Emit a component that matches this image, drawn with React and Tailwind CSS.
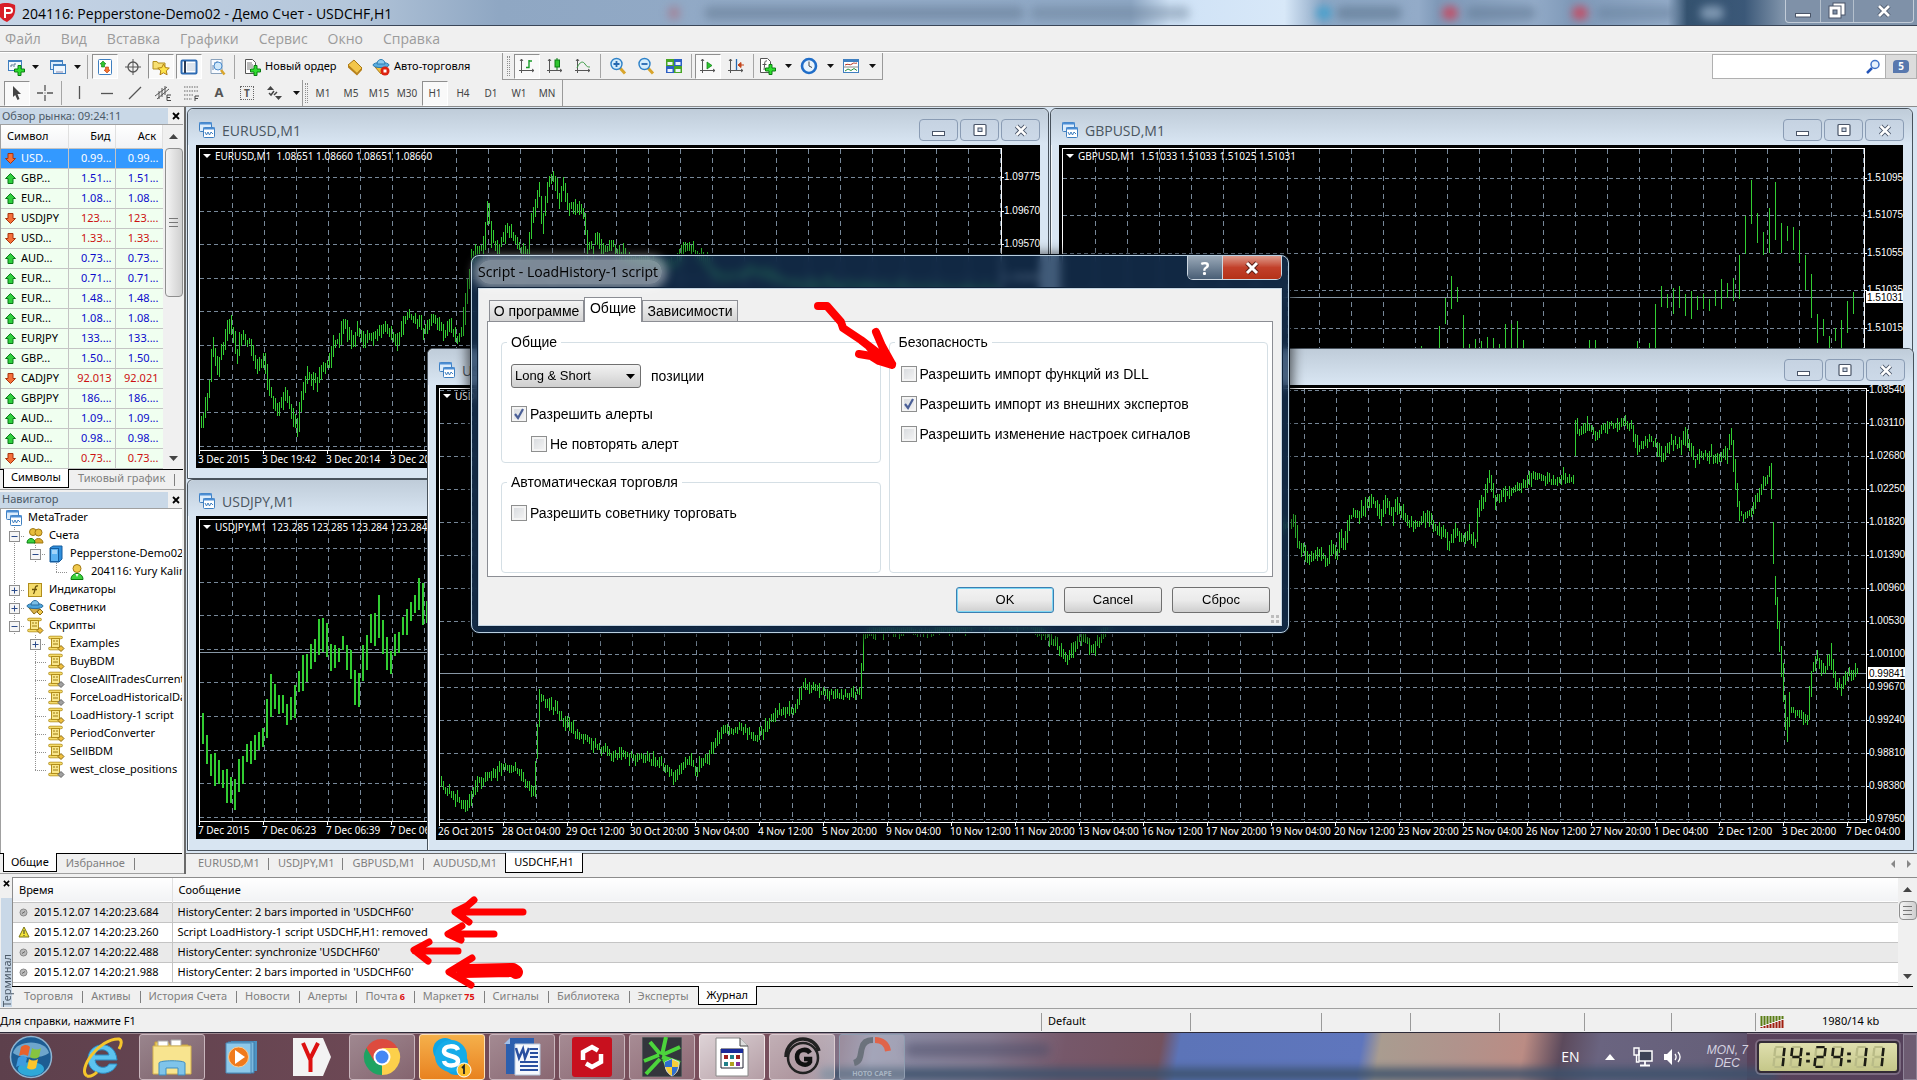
import React from 'react';

/* ---------- helpers ---------- */

function rand(seed) {
  let s = seed;
  return () => {
    s = (s * 16807) % 2147483647;
    return s / 2147483647;
  };
}

function barPath(points, spread, seed, step = 2) {
  const r = rand(seed);
  let d = '';
  let i = 0;
  const end = points[points.length - 1][0];
  for (let x = points[0][0]; x <= end; x += step) {
    while (i < points.length - 2 && points[i + 1][0] < x) i += 1;
    const [x0, y0] = points[i];
    const [x1, y1] = points[i + 1];
    const t = x1 === x0 ? 1 : (x - x0) / (x1 - x0);
    const slope = Math.min(30, Math.abs((y1 - y0) / Math.max(1, x1 - x0)) * step);
    const y = y0 + (y1 - y0) * t + (r() - 0.5) * spread * 0.6;
    const up = spread * (0.25 + r() * r()) + slope / 2;
    const dn = spread * (0.25 + r() * r()) + slope / 2;
    d += `M${Math.round(x) + 0.5} ${Math.round(y - up)}V${Math.round(y + dn)}`;
  }
  return d;
}

const scale = (pts, kx, ox, ky, oy) => pts.map(([x, y]) => [x * kx + ox, y * ky + oy]);

/* ---------- chart data ---------- */

const eurPoints = scale(
  [[28,960],[38,920],[48,860],[56,720],[68,800],[85,710],[100,650],[116,745],[126,700],[150,720],[165,790],[180,760],[196,860],[215,920],[235,870],[252,930],[265,980],[275,880],[288,810],[310,830],[325,800],[345,770],[352,710],[365,705],[380,650],[402,720],[412,670],[425,700],[440,690],[455,700],[480,660],[508,720],[525,640],[552,640],[575,680],[595,640],[630,685],[637,660],[655,700],[668,680],[682,540],[690,470],[706,430],[718,440],[731,310],[740,390],[755,440],[777,370],[795,400],[820,450],[830,440],[840,340],[857,250],[865,360],[880,240],[892,210],[905,290],[915,240],[930,310],[945,300],[965,320],[975,420],[990,425],[997,400],[1010,440],[1032,415],[1050,440],[1100,470],[1190,475],[1215,420],[1240,445],[1300,520],[1400,500],[1480,540],[1980,560]],
  0.408, -6, 0.333, -40,
);

const chfPoints = [
  ...scale(
    [[361,643],[375,655],[382,660],[392,640],[405,632],[420,628],[430,640],[437,650],[440,600],[442,572],[455,582],[470,600],[480,605],[500,618],[520,620],[540,625],[553,638],[562,622],[570,630],[580,618],[590,600],[605,597],[620,604],[635,585],[650,580],[657,562],[670,566],[690,570],[704,566],[707,520],[730,515],[760,518],[800,510],[845,512],[862,525],[872,540],[885,520],[895,533],[905,510],[910,480],[950,460],[1000,400],[1050,430]],
    1.2226, -436, 1.2226, -386,
  ),
  ...scale(
    [[32,560],[42,530],[52,620],[66,635],[78,670],[100,640],[125,665],[135,620],[148,640],[155,590],[165,630],[180,530],[200,530],[225,485],[245,495],[255,540],[268,480],[285,530],[293,495],[315,540],[340,560],[370,530],[400,580],[405,570],[422,615],[440,580],[460,600],[470,585],[487,620],[495,510],[510,470],[522,410],[535,490],[550,465],[575,455],[605,440],[625,410],[650,410],[675,430],[700,415],[720,430],[729,430],[731,300],[734,245],[740,285],[760,260],[780,290],[810,260],[850,250],[870,265],[885,330],[905,305],[925,310],[948,360],[965,310],[990,320],[1004,290],[1025,365],[1045,350],[1070,350],[1080,370],[1095,340],[1102,360],[1112,290],[1118,330],[1128,470],[1135,530],[1160,530],[1175,490],[1195,430],[1210,400],[1214,480],[1218,700],[1228,850],[1240,1010],[1250,1180],[1256,1110],[1280,1120],[1300,1150],[1312,1000],[1325,960],[1337,1000],[1345,990],[1358,950],[1370,1040],[1385,1040],[1405,1000],[1425,1005]],
    0.408, 841, 0.333, -46,
  ),
];

const gbpPoints = scale(
  [[868,270],[900,290],[960,300],[1055,300],[1120,310],[1174,300],[1180,262],[1188,240],[1193,240],[1197,285],[1208,292],[1214,282],[1225,290],[1240,278],[1250,300],[1295,300],[1302,284],[1312,295],[1352,290],[1356,240],[1370,248],[1384,250],[1400,246],[1412,240],[1422,232],[1427,200],[1430,150],[1436,185],[1444,205],[1450,165],[1456,195],[1464,190],[1472,205],[1480,235],[1486,265],[1494,275],[1504,278],[1512,255],[1519,245]],
  1.2226, -1059, 1.2226, -146,
);

const jpyPoints = scale(
  [[165,600],[170,620],[180,640],[190,655],[200,620],[215,600],[220,570],[235,585],[245,560],[258,530],[262,510],[270,540],[280,530],[292,565],[300,530],[308,505],[318,540],[330,515],[342,490],[350,510],[420,520]],
  1.2226, -196, 1.2226, -518,
);

const chfTimes = ['26 Oct 2015','28 Oct 04:00','29 Oct 12:00','30 Oct 20:00','3 Nov 04:00','4 Nov 12:00','5 Nov 20:00','9 Nov 04:00','10 Nov 12:00','11 Nov 20:00','13 Nov 04:00','16 Nov 12:00','17 Nov 20:00','19 Nov 04:00','20 Nov 12:00','23 Nov 20:00','25 Nov 04:00','26 Nov 12:00','27 Nov 20:00','1 Dec 04:00','2 Dec 12:00','3 Dec 20:00','7 Dec 04:00'];
const chfPrices = ['1.03540','1.03110','1.02680','1.02250','1.01820','1.01390','1.00960','1.00530','1.00100','0.99670','0.99240','0.98810','0.98380','0.97950'];

/* ---------- chart ---------- */

function Chart({ w, h, caption, points, spread, seed, step, weight = 1, gridTop, gridStep, prices = [], times = [], priceLine, priceTag }) {
  const right = w - 39;
  const bottom = h - 18;
  const vs = [];
  for (let x = 36; x < right; x += 32) vs.push(x);
  const hs = [];
  for (let y = gridTop; y < bottom; y += gridStep) hs.push(Math.round(y));
  return (
    <svg width={w} height={h} viewBox={`0 0 ${w} ${h}`} className="block bg-black" role="img" aria-label={caption}>
      <g shapeRendering="crispEdges" fill="none">
        <path d={vs.map((x) => `M${x}.5 4V${bottom}`).join('')} stroke="#778899" strokeDasharray="5 4" />
        <path d={hs.map((y) => `M4 ${y}.5H${right}`).join('')} stroke="#778899" strokeDasharray="4 3" />
        {priceLine && <path d={`M4 ${priceLine}.5H${right}`} stroke="#8797a5" />}
        <path d={barPath(points, spread, seed, step)} stroke="#32cd32" strokeWidth={weight} />
        <path d={`M3.5 ${bottom}V3.5H${right}.5V${bottom}.5H3.5`} stroke="#ffffff" />
        <path d={times.map((_, i) => `M${3 + i * 64}.5 ${bottom}v4`).join('')} stroke="#ffffff" />
        <path d={prices.map((_, i) => `M${right} ${Math.round(gridTop + i * gridStep)}.5h3`).join('')} stroke="#ffffff" />
      </g>
      <g fill="#ffffff" className="font-['Noto_Sans',sans-serif] text-[10px]">
        <path d="M7 9h8l-4 4z" />
        <text x="19" y="15">{caption}</text>
        {times.map((t, i) => (
          <text key={t} x={2 + i * 64} y={bottom + 13}>{t}</text>
        ))}
      </g>
      <g fill="#ffffff" className="font-['Liberation_Sans',sans-serif] text-[10px]">
        {prices.map((p, i) => (
          <text key={p} x={right + 3} y={Math.round(gridTop + i * gridStep) + 3}>{p}</text>
        ))}
        {priceTag && (
          <>
            <path d={`M${right + 2} ${priceLine - 6}H${w}v12H${right + 2}z`} />
            <text x={right + 3} y={priceLine + 4} fill="#000000">{priceTag}</text>
          </>
        )}
      </g>
    </svg>
  );
}

/* ---------- icons ---------- */

const Svg = ({ w = 18, h = 18, vb = '0 0 18 18', children, className = '' }) => (
  <svg width={w} height={h} viewBox={vb} fill="none" className={`shrink-0 ${className}`} aria-hidden="true">{children}</svg>
);
const plus = <path d="M11 7.500h3v3.500h3.500v3H14v3.500h-3V14H7.500v-3H11z" fill="#2fdd2f" stroke="#0a7d12" />;

const icons = {
  newChart: <Svg><rect x="1.500" y="2.500" width="13" height="10" fill="#f4faff" stroke="#3f7fc0" /><path d="M1 3h14" stroke="#3f7fc0" strokeWidth="2" /><path d="M3 8h2V6M7 9V6h2" stroke="#5d7890" />{plus}</Svg>,
  profiles: <Svg><rect x="1.500" y="2.500" width="12" height="9" fill="#dcecfb" stroke="#3f7fc0" /><path d="M1 3h13" stroke="#3f7fc0" strokeWidth="2" /><rect x="4.500" y="6.500" width="12" height="9" fill="#eef6fe" stroke="#3f7fc0" /><path d="M4 7h13" stroke="#3f7fc0" strokeWidth="2" /><path d="M7 14h7" stroke="#88a" /></Svg>,
  market: <Svg><rect x="2.500" y="1.500" width="13" height="15" rx="1" fill="#fff" stroke="#3f7fc0" /><path d="M7 3l3 3H8.500v3h-3V6H4z" fill="#2fc52f" stroke="#0a7d12" strokeWidth=".6" /><path d="M11 15l-3-3h1.500V9h3v3H14z" fill="#f6762f" stroke="#b5390d" strokeWidth=".6" /></Svg>,
  cross: <Svg><circle cx="9" cy="9" r="5" stroke="#555" strokeWidth="1.300" /><path d="M9 1v16M1 9h16" stroke="#555" /></Svg>,
  folderStar: <Svg><path d="M1 3.500h4l1 1.500h7v6H1z" fill="#f7df72" stroke="#b18d1c" /><path d="M11.500 6l1.800 3.600 4 .5-3 2.700.8 4-3.600-2-3.500 2 .8-4-3-2.700 4-.5z" fill="#fde34a" stroke="#b07f12" /></Svg>,
  panel: <Svg><rect x="1.500" y="2.500" width="15" height="13" rx="1" fill="#fff" stroke="#2d6bb4" strokeWidth="2" /><path d="M5 3v12" stroke="#2a3c58" strokeWidth="2" /><path d="M7 6h8M7 8h8M7 10h8M7 12h8" stroke="#b8c8dc" /></Svg>,
  tester: <Svg><path d="M3 1.500h11v14H3z" fill="#f8fbff" stroke="#8aa2bc" /><path d="M5 12V7M7 9V4M9 7V3" stroke="#6a8aae" /><circle cx="10" cy="8" r="4" fill="#cfe8fa" stroke="#4d8ccc" /><path d="M13 12l3.500 4.500" stroke="#d8a52c" strokeWidth="2.500" /></Svg>,
  order: <Svg><path d="M2.500 1.500h7l3 3v11h-10z" fill="#fff" stroke="#555" /><path d="M4 5h5M4 7h6M4 9h6M4 11h3" stroke="#777" />{plus}</Svg>,
  gold: <Svg><path d="M2 7l6-5 8 8-5 5.500z" fill="#f3c64b" stroke="#a87814" /><path d="M2 7v2.500l9 8L16 12v-2l-5 5.500z" fill="#b87f16" /></Svg>,
  auto: <Svg><path d="M3 9l6 7 5-6z" fill="#f0bf3e" stroke="#a87814" /><ellipse cx="9" cy="7" rx="8" ry="2.600" fill="#5aade0" stroke="#2d7fb4" /><path d="M5 6c0-6 8-6 8 0z" fill="#8ccbee" stroke="#2d7fb4" /><circle cx="13" cy="13" r="4.500" fill="#dd2211" /><rect x="11.500" y="11.500" width="3" height="3" fill="#fff" /></Svg>,
  bars: <Svg><path d="M3.500 2v14M1 13.500h15M2 4l1.500-2L5 4M14 12l2 1.500-2 1.500" stroke="#555" /><path d="M8 10.500h3V3M11 4h3" stroke="#189c28" strokeWidth="1.400" /></Svg>,
  candle: <Svg><path d="M3.500 2v14M1 13.500h15M2 4l1.500-2L5 4M14 12l2 1.500-2 1.500" stroke="#555" /><path d="M11 1v12" stroke="#0a7d12" /><rect x="9" y="3" width="4.500" height="7" fill="#2fc52f" stroke="#0a7d12" /></Svg>,
  line: <Svg><path d="M3.500 2v14M1 13.500h15M2 4l1.500-2L5 4M14 12l2 1.500-2 1.500" stroke="#555" /><path d="M3 11c3-7 6-7 8-4s3 3 5 3" stroke="#3a9a44" /></Svg>,
  zoomIn: <Svg><path d="M11 11l5 5.500" stroke="#d8a52c" strokeWidth="3" /><circle cx="7.500" cy="7" r="5.500" fill="#d4edfb" stroke="#2f82c8" strokeWidth="1.400" /><path d="M7.500 4v6M4.500 7h6" stroke="#2468b0" strokeWidth="1.800" /></Svg>,
  zoomOut: <Svg><path d="M11 11l5 5.500" stroke="#d8a52c" strokeWidth="3" /><circle cx="7.500" cy="7" r="5.500" fill="#d4edfb" stroke="#2f82c8" strokeWidth="1.400" /><path d="M4.500 7h6" stroke="#2468b0" strokeWidth="1.800" /></Svg>,
  tile: <Svg><path d="M1 2h8v7H1zM9 9h8v7H9z" fill="#48a624" /><path d="M9 2h8v7H9zM1 9h8v7H1z" fill="#2c5fc4" /><path d="M2.500 5h5v3h-5zM10.500 5h5v3h-5zM2.500 12h5v3h-5zM10.500 12h5v3h-5z" fill="#eef4fc" /></Svg>,
  scroll: <Svg><path d="M3.500 2v14M1 13.500h15M2 4l1.500-2L5 4M14 12l2 1.500-2 1.500" stroke="#555" /><path d="M8 5l5 3.500L8 12z" fill="#2fc52f" stroke="#0a7d12" strokeWidth=".7" /></Svg>,
  shift: <Svg><path d="M3.500 2v14M1 13.500h15M2 4l1.500-2L5 4M14 12l2 1.500-2 1.500" stroke="#555" /><path d="M9.500 2v11" stroke="#2468b0" strokeWidth="1.300" /><path d="M11 8h6M11 8l3-2.500v5z" stroke="#c4451a" fill="#c4451a" /></Svg>,
  indicators: <Svg><path d="M2.500 1.500h7l3 3v11h-10z" fill="#fff" stroke="#555" /><path d="M9 4c-3-1-2 3-3 9M4.500 7.500h4" stroke="#555" />{plus}</Svg>,
  clock: <Svg><circle cx="9" cy="9" r="7" fill="#e8f4fd" stroke="#1f6dc8" strokeWidth="2.600" /><path d="M9 4.500V9l3 1.500" stroke="#444" /></Svg>,
  template: <Svg><rect x="1.500" y="2.500" width="15" height="13" fill="#fff" stroke="#3f7fc0" /><path d="M1 3.500h16" stroke="#3f7fc0" strokeWidth="3" /><path d="M3 8c3-2 5 1 7-1s3 0 5-1" stroke="#b03020" /><path d="M1.500 10h15" stroke="#888" /><path d="M3 14l3-2 3 1.500 3-2 3 2" stroke="#26903a" /></Svg>,
  cursor: <Svg><path d="M5 2l8 8H9.500l2 5-2 1-2.300-5L5 13z" fill="#444" /></Svg>,
  thinCross: <Svg><path d="M9 1v6M9 11v6M1 9h6M11 9h6" stroke="#555" strokeWidth="1.300" /><path d="M8.500 8.500h1v1h-1z" fill="#555" /></Svg>,
  vline: <Svg><path d="M9.500 2v13" stroke="#555" strokeWidth="1.300" /></Svg>,
  hline: <Svg><path d="M3 9.500h12" stroke="#555" strokeWidth="1.300" /></Svg>,
  tline: <Svg><path d="M3 15L15 3" stroke="#555" strokeWidth="1.300" /></Svg>,
  channel: <Svg><path d="M1 12L13 3M3 15L15 5M5 15V7M8 13V4M11 11V2" stroke="#555" /><path d="M17 11h-4v5.500h4M13 13.500h3" stroke="#444" /></Svg>,
  fib: <Svg><path d="M2 3h14M2 7h14M2 11h10M2 15h8" stroke="#666" strokeDasharray="1.500 1" /><path d="M17 12h-4v5M13 14.500h3" stroke="#444" /></Svg>,
  arrows: <Svg><path d="M1 6l3.500-4L8 6zM9 12h7l-3.500 4z" fill="#444" /><path d="M3 9l2 2 3-4M8 11l3-3" stroke="#444" strokeWidth="1.500" /></Svg>,
  charts: <Svg><rect x="1.500" y="1.500" width="12" height="9" rx="1" fill="#dcecfb" stroke="#3f7fc0" /><path d="M1 2.500h13" stroke="#4c8ed4" strokeWidth="2" /><rect x="5.500" y="6.500" width="11" height="10" rx="1" fill="#fff" stroke="#3f7fc0" /><path d="M5 7.500h12" stroke="#4c8ed4" strokeWidth="2" /><path d="M7 11l1.500 3 1.500-3 1.500 3 1.500-3 2 2" stroke="#3f7fc0" /></Svg>,
  accounts: <Svg><circle cx="7" cy="5" r="3.500" fill="#e7bd3d" stroke="#a07812" /><circle cx="12.500" cy="5.500" r="3.500" fill="#e7bd3d" stroke="#a07812" /><path d="M8 16c0-6 9-6 9 0z" fill="#d9a92c" stroke="#a07812" /><path d="M1 16c0-6 8-6 8 0z" fill="#3cd23c" stroke="#0a7d12" /></Svg>,
  server: <Svg><path d="M3 3l3-2h9v13l-3 3H3z" fill="#2f8edb" stroke="#155d9f" /><rect x="3.500" y="3.500" width="8" height="13" fill="#5bb2f2" stroke="#155d9f" /><path d="M5 6h5M5 8h5" stroke="#eaf6ff" /></Svg>,
  user: <Svg><circle cx="9" cy="5.500" r="4" fill="#f0c94d" stroke="#a07812" /><path d="M3 16.500c0-8 12-8 12 0z" fill="#3cd23c" stroke="#0a7d12" /><path d="M7.500 11h3L9 14z" fill="#fff" /></Svg>,
  fx: <Svg><rect x="2.500" y="2.500" width="13" height="13" fill="#f5dc6c" stroke="#b18d1c" /><path d="M12 5c-4-1-2 4-4.500 8M6 8.500h5" stroke="#6b5208" strokeWidth="1.300" /></Svg>,
  hat: <Svg><path d="M3 9l5 6 6-5z" fill="#d8b04a" stroke="#8a6a14" /><ellipse cx="9" cy="7" rx="8" ry="2.600" fill="#4aa3dc" stroke="#2d6f9f" /><path d="M5 6c0-6 8-6 8 0z" fill="#7cc0e8" stroke="#2d6f9f" /><path d="M14 10l3 3-3 3-3-3z" fill="#f0c94d" stroke="#8a6a14" /></Svg>,
};

const ScriptIcon = ({ gray }) => (
  <Svg>
    <path d="M3 2.500h11M3 13.500h10" stroke="#b18d1c" strokeWidth="3.500" strokeLinecap="round" />
    <path d="M3 2.500h11M3 13.500h10" stroke="#f5dc6c" strokeWidth="2" strokeLinecap="round" />
    <rect x="4.500" y="3.500" width="8" height="9" fill="#f9e68a" stroke="#b18d1c" />
    <path d="M6 6h2M9 6h2M6 9h5" stroke="#9a7a14" />
    <path d="M14 10.500l3 3-3 3-3-3z" fill={gray ? '#a0a0a0' : '#f0bf3e'} stroke={gray ? '#666' : '#8a6a14'} />
  </Svg>
);

const Down = () => <Svg w={7} h={4} vb="0 0 7 4"><path d="M0 0h7L3.500 4z" fill="#111" /></Svg>;

/* ---------- toolbars ---------- */

const Sep = ({ className = 'mx-1' }) => <span className={`h-6 w-px shrink-0 bg-[#a5a5a5] ${className}`} />;
const Grip = ({ className = 'mx-1' }) => <span className={`h-5 w-[3px] shrink-0 border-x border-dotted border-[#8f8f8f] ${className}`} />;

function Tool({ label, icon, on, drop }) {
  return (
    <>
      <button
        type="button"
        aria-label={label}
        className={`flex h-[25px] w-[26px] shrink-0 items-center justify-center border ${on ? 'border-[#8f8f8f] border-r-white border-b-white bg-[#f9f9f9]' : 'border-transparent'}`}
      >
        {icon}
      </button>
      {drop && (
        <button type="button" aria-label={`${label} menu`} className="flex h-6 w-3 shrink-0 items-center justify-center"><Down /></button>
      )}
    </>
  );
}

function MainToolbar() {
  return (
    <div className="flex h-[28px] items-center border-t border-white text-black">
      <div className="flex h-full items-center border-r border-[#9a9a9a] pr-6 pl-[3px]">
        <Tool label="Новый график" icon={icons.newChart} drop />
        <span className="w-1" />
        <Tool label="Профили" icon={icons.profiles} drop />
        <Sep />
        <div className="flex gap-0.5">
          <Tool label="Обзор рынка" icon={icons.market} on />
          <Tool label="Окно данных" icon={icons.cross} />
          <Tool label="Навигатор" icon={icons.folderStar} on />
          <Tool label="Терминал" icon={icons.panel} on />
          <Tool label="Тестер стратегий" icon={icons.tester} />
        </div>
        <Sep />
        <button type="button" className="flex h-6 w-[103px] items-center gap-1 pl-1 text-[11px] whitespace-nowrap">{icons.order}Новый ордер</button>
        <Tool label="Редактор" icon={icons.gold} />
        <button type="button" className="flex h-6 w-[110px] items-center gap-1 pl-1 text-[11px] whitespace-nowrap">{icons.auto}Авто-торговля</button>
      </div>
      <div className="flex h-full items-center border-r border-b border-[#9a9a9a] pr-1">
        <Grip />
        <div className="flex gap-0.5">
          <Tool label="Бары" icon={icons.bars} on />
          <Tool label="Свечи" icon={icons.candle} />
          <Tool label="Линия" icon={icons.line} />
        </div>
        <Sep />
        <div className="flex gap-0.5">
          <Tool label="Увеличить" icon={icons.zoomIn} />
          <Tool label="Уменьшить" icon={icons.zoomOut} />
          <Tool label="Окна" icon={icons.tile} />
        </div>
        <Sep className="ml-1 mr-[3px]" />
        <div className="flex gap-0.5">
          <Tool label="Автопрокрутка" icon={icons.scroll} on />
          <Tool label="Сдвиг" icon={icons.shift} />
        </div>
        <Sep className="ml-1" />
        <div className="flex gap-0.5">
          <Tool label="Индикаторы" icon={icons.indicators} drop />
          <Tool label="Периоды" icon={icons.clock} drop />
          <Tool label="Шаблоны" icon={icons.template} drop />
        </div>
      </div>
      <div className="ml-auto flex h-[25px] items-stretch border border-[#b0b0b0] bg-white">
        <input aria-label="Поиск" className="w-[148px] bg-white px-1 outline-none" />
        <button type="button" aria-label="Искать" className="flex w-6 items-center justify-center">
          <Svg w={16} h={16} vb="0 0 16 16"><path d="M7 9l-5 5" stroke="#2455b8" strokeWidth="2.500" /><circle cx="10" cy="5.500" r="4" fill="#e8f2fc" stroke="#3f72c8" strokeWidth="1.500" /></Svg>
        </button>
        <button type="button" className="flex w-[31px] items-center justify-center border-l border-[#b0b0b0] bg-[#dcdcdc]">
          <span className="flex h-[13px] w-4 items-center justify-center rounded-sm rounded-bl-none bg-[#5878ae] text-[10px] font-bold text-white">5</span>
        </button>
      </div>
    </div>
  );
}

const frames = ['M1', 'M5', 'M15', 'M30', 'H1', 'H4', 'D1', 'W1', 'MN'];

function DrawToolbar() {
  return (
    <div className="flex h-[27px] items-center border-b border-[#8c8c8c] pl-1 text-[10px] text-[#444]">
      <div className="flex h-full items-center gap-0.5 border-r border-[#9a9a9a]">
        <Tool label="Курсор" icon={icons.cursor} on />
        <Tool label="Перекрестие" icon={icons.thinCross} />
        <Sep className="mr-0.5 ml-px" />
        <Tool label="Вертикальная линия" icon={icons.vline} />
        <Tool label="Горизонтальная линия" icon={icons.hline} />
        <Tool label="Трендовая линия" icon={icons.tline} />
        <Tool label="Канал" icon={icons.channel} />
        <Tool label="Фибоначчи" icon={icons.fib} />
        <Tool label="Текст" icon={<span className="text-[13px] font-bold text-[#555]">A</span>} />
        <Tool label="Метка" icon={<span className="border border-dotted border-[#666] px-[3px] text-[10px] leading-3 font-bold text-[#555]">T</span>} />
        <Tool label="Стрелки" icon={icons.arrows} drop />
      </div>
      <div className="flex h-full items-center gap-0.5 border-r border-[#9a9a9a] pr-0.5">
        <Grip className="ml-0.5" />
        {frames.map((f) => (
          <button key={f} type="button" className={`h-[25px] w-[26px] border text-center ${f === 'H1' ? 'border-[#8f8f8f] border-r-white border-b-white bg-[#f9f9f9]' : 'border-transparent'}`}>{f}</button>
        ))}
      </div>
    </div>
  );
}

/* ---------- side panels ---------- */

const quotes = [
  ['USD...', '0.99...', '0.99...', 'sel'], ['GBP...', '1.51...', '1.51...', 'up'], ['EUR...', '1.08...', '1.08...', 'up'],
  ['USDJPY', '123....', '123....', 'down'], ['USD...', '1.33...', '1.33...', 'down'], ['AUD...', '0.73...', '0.73...', 'up'],
  ['EUR...', '0.71...', '0.71...', 'up'], ['EUR...', '1.48...', '1.48...', 'up'], ['EUR...', '1.08...', '1.08...', 'up'],
  ['EURJPY', '133....', '133....', 'up'], ['GBP...', '1.50...', '1.50...', 'up'], ['CADJPY', '92.013', '92.021', 'down'],
  ['GBPJPY', '186....', '186....', 'up'], ['AUD...', '1.09...', '1.09...', 'up'], ['AUD...', '0.98...', '0.98...', 'up'],
  ['AUD...', '0.73...', '0.73...', 'down'],
];

const Trend = ({ up }) => (
  <Svg w={11} h={11} vb="0 0 11 11">
    {up
      ? <path d="M5.500 .5l5 5H8v5H3v-5H.5z" fill="#2fcf3f" stroke="#0b7a18" />
      : <path d="M5.500 10.500l5-5H8v-5H3v5H.5z" fill="#f4713a" stroke="#a8330c" />}
  </Svg>
);

const PanelTitle = ({ children }) => (
  <div className="flex h-4 items-center justify-between bg-[#c9d8e7] pl-0.5 text-[11px] text-[#4c5a68]">
    <span>{children}</span>
    <button type="button" aria-label="Закрыть" className="flex h-4 w-4 items-center justify-center bg-[#f0f0f0]">
      <Svg w={8} h={8} vb="0 0 8 8"><path d="M1 1l6 6M7 1L1 7" stroke="#000" strokeWidth="1.800" /></Svg>
    </button>
  </div>
);

const PanelTabs = ({ active, other }) => (
  <div className="flex h-5 items-start border-t border-black bg-[#f0f0f0] pl-[3px] text-[11px]">
    <button type="button" className="-mt-px h-[19px] border-x border-b border-black bg-white px-[7px]">{active}</button>
    <button type="button" className="h-[18px] px-[9px] whitespace-nowrap text-[#808080]">{other}</button>
    <span className="mt-1 h-3 w-px bg-[#808080]" />
  </div>
);

function ScrollBar({ thumb, className = '' }) {
  return (
    <div className={`flex w-[19px] shrink-0 flex-col items-center bg-[#f0f0f0] ${className}`}>
      <button type="button" aria-label="Вверх" className="flex h-[23px] w-full shrink-0 items-center justify-center"><Svg w={9} h={5} vb="0 0 9 5"><path d="M0 5h9L4.500 0z" fill="#444" /></Svg></button>
      <div className={`flex w-[18px] items-center justify-center rounded-sm border border-[#8f8f8f] bg-linear-to-r from-[#f4f4f4] to-[#cfcfcf] ${thumb}`}>
        <Svg w={9} h={11} vb="0 0 9 11"><path d="M0 1.500h9M0 5.500h9M0 9.500h9" stroke="#777" /></Svg>
      </div>
      <button type="button" aria-label="Вниз" className="mt-auto flex h-5 w-full shrink-0 items-center justify-center"><Svg w={9} h={5} vb="0 0 9 5"><path d="M0 0h9L4.500 5z" fill="#444" /></Svg></button>
    </div>
  );
}

function MarketWatch() {
  const th = 'border-r border-[#e0e0e0] py-0 font-normal';
  return (
    <section className="border-b border-[#a0a0a0] bg-[#f0f0f0] pt-px">
      <PanelTitle>Обзор рынка: 09:24:11</PanelTitle>
      <div className="mr-px">
        <div className="flex border-t border-l border-[#a0a0a0]">
          <table className="flex-1 table-fixed border-collapse bg-white text-[11px]">
            <colgroup><col className="w-[67px]" /><col className="w-[46px]" /><col className="w-[47px]" /></colgroup>
            <thead>
              <tr className="h-[23px] bg-linear-to-b from-white to-[#f2f3f5]">
                <th className={`${th} pl-1.5 text-left`}>Символ</th>
                <th className={`${th} pr-1 text-right`}>Бид</th>
                <th className={`${th} pr-1.5 text-right`}>Аск</th>
              </tr>
            </thead>
            <tbody>
              {quotes.map(([s, b, a, k], i) => {
                const tone = k === 'sel' ? 'text-white' : k === 'up' ? 'text-[#0a0acc]' : 'text-[#cc1111]';
                return (
                  <tr key={i} className={`h-5 border-y border-[#c4c4c4] ${k === 'sel' ? 'bg-[#3399ff] text-white' : 'bg-[#f0fff0] text-black'}`}>
                    <td className="border-r border-[#c4c4c4] p-0">
                      <span className="flex items-center gap-[5px] pl-1"><Trend up={k === 'up'} />{s}</span>
                    </td>
                    <td className={`border-r border-[#c4c4c4] p-0 pr-[3px] text-right ${tone}`}>{b}</td>
                    <td className={`p-0 pr-1 text-right ${tone}`}>{a}</td>
                  </tr>
                );
              })}
            </tbody>
          </table>
          <ScrollBar thumb="h-[149px]" className="ml-px" />
        </div>
        <PanelTabs active="Символы" other="Тиковый график" />
      </div>
    </section>
  );
}

const tree = [
  ['', icons.charts, 'MetaTrader'],
  ['-', icons.accounts, 'Счета'],
  ['v-', icons.server, 'Pepperstone-Demo02'],
  ['v l', icons.user, '204116: Yury Kalinin'],
  ['+', icons.fx, 'Индикаторы'],
  ['+', icons.hat, 'Советники'],
  ['-', <ScriptIcon />, 'Скрипты'],
  [' +', <ScriptIcon />, 'Examples'],
  [' t', <ScriptIcon />, 'BuyBDM'],
  [' t', <ScriptIcon gray />, 'CloseAllTradesCurrent'],
  [' t', <ScriptIcon gray />, 'ForceLoadHistoricalData'],
  [' t', <ScriptIcon />, 'LoadHistory-1 script'],
  [' t', <ScriptIcon />, 'PeriodConverter'],
  [' t', <ScriptIcon />, 'SellBDM'],
  [' l', <ScriptIcon gray />, 'west_close_positions'],
];

const guides = { v: 'M10.500 0v18', t: 'M10.500 0v18M10 9.500h11', l: 'M10.500 0v9M10 9.500h11', '-': 'M10.500 0v18M15 9.500h6', '+': 'M10.500 0v18M15 9.500h6', ' ': '' };

const TreeCell = ({ kind }) => (
  <Svg w={21} h={18} vb="0 0 21 18">
    <path d={guides[kind]} stroke="#909090" strokeDasharray="1 1" />
    {(kind === '-' || kind === '+') && (
      <>
        <rect x="5.500" y="4.500" width="10" height="10" fill="#f6f6f6" stroke="#8f8f8f" />
        <path d={kind === '+' ? 'M7.500 9.500h6M10.500 6.500v6' : 'M7.500 9.500h6'} stroke="#2a4a8a" />
      </>
    )}
  </Svg>
);

function Navigator() {
  return (
    <section className="flex flex-1 flex-col border-b border-[#a0a0a0] bg-[#f0f0f0] pt-0.5">
      <PanelTitle>Навигатор</PanelTitle>
      <div className="mr-0.5 flex flex-1 flex-col">
        <ul className="flex-1 overflow-hidden border-t border-l border-[#a0a0a0] bg-white pl-[3px] text-[11px] text-black">
          {tree.map(([cells, icon, text]) => (
            <li key={text} className="flex h-[18px] items-center whitespace-nowrap">
              {cells.split('').map((c, i) => <TreeCell key={i} kind={c} />)}
              <span className="flex w-5 shrink-0 justify-center">{icon}</span>
              <span className="ml-1">{text}</span>
            </li>
          ))}
        </ul>
        <PanelTabs active="Общие" other="Избранное" />
      </div>
    </section>
  );
}

/* ---------- MDI windows ---------- */

const winBtn = 'flex h-[22px] w-[39px] items-center justify-center rounded-sm border border-[#8a9cb4] bg-linear-to-b from-[#c6d3e2] to-[#ccd9e8]';

function ChildWindow({ title, className, children }) {
  return (
    <section className={`absolute flex flex-col rounded-t-md border border-[#48525c] bg-[#d8e5f2] px-2 shadow-[inset_1px_1px_0_#f3f8fc] ${className}`}>
      <header className="-mx-2 flex h-[36px] shrink-0 items-center justify-between rounded-t-md bg-linear-to-b from-[#bfccd9] to-[#d9e6f3] px-2 pt-1.5">
        <h2 className="flex items-center gap-1.5 pl-0.5 font-['Open_Sans',sans-serif] text-[14px] text-[#4a5560]">{icons.charts}{title}</h2>
        <div className="flex gap-0.5">
          <button type="button" aria-label="Свернуть" className={winBtn}><Svg w={14} h={14} vb="0 0 14 14"><rect x=".5" y="8.500" width="12" height="4" fill="#fff" stroke="#4a5568" /></Svg></button>
          <button type="button" aria-label="Развернуть" className={winBtn}><Svg w={14} h={14} vb="0 0 14 14"><rect x="1" y="1.500" width="12" height="11" rx="1" fill="#fff" stroke="#4a5568" strokeWidth="1.200" /><rect x="5" y="5" width="4" height="3.500" fill="#ccd9e8" stroke="#4a5568" /></Svg></button>
          <button type="button" aria-label="Закрыть" className={winBtn}><Svg w={14} h={13} vb="0 0 14 13"><path d="M2.500 2l9 9M11.500 2l-9 9" stroke="#4a5568" strokeWidth="4.500" /><path d="M2.500 2l9 9M11.500 2l-9 9" stroke="#fff" strokeWidth="2.500" /></Svg></button>
        </div>
      </header>
      <div className="overflow-hidden">{children}</div>
    </section>
  );
}

function Workspace() {
  return (
    <div className="relative flex-1 overflow-hidden bg-[#d8e5f2]">
      <ChildWindow title="EURUSD,M1" className="top-px left-px h-[371px] w-[862px]">
        <Chart w={844} h={323} caption={'EURUSD,M1\u00a0 1.08651 1.08660 1.08651 1.08660'} points={eurPoints} spread={9} seed={77} gridTop={32} gridStep={33.600} prices={['1.09775', '1.09670', '1.09570', '1.09465']} times={['3 Dec 2015', '3 Dec 19:42', '3 Dec 20:14', '3 Dec 20:46']} />
      </ChildWindow>
      <ChildWindow title="GBPUSD,M1" className="top-px left-[864px] h-[371px] w-[863px]">
        <Chart w={844} h={323} caption={'GBPUSD,M1\u00a0 1.51033 1.51033 1.51025 1.51031'} points={gbpPoints} spread={16} seed={421} step={6} gridTop={33} gridStep={37.400} prices={['1.51095', '1.51075', '1.51055', '1.51035', '1.51015']} priceLine={152} priceTag="1.51031" />
      </ChildWindow>
      <ChildWindow title="USDJPY,M1" className="top-[372px] left-px h-[372px] w-[862px]">
        <Chart w={844} h={323} caption={'USDJPY,M1\u00a0 123.285 123.285 123.284 123.284'} points={jpyPoints} spread={18} seed={99} step={4} weight={2} gridTop={32} gridStep={33.600} priceLine={136} times={['7 Dec 2015', '7 Dec 06:23', '7 Dec 06:39', '7 Dec 06:55']} />
      </ChildWindow>
      <ChildWindow title="USDCHF,H1" className="top-[241px] left-[241px] h-[503px] w-[1487px]">
        <Chart w={1469} h={455} caption={'USDCHF,H1\u00a0 0.99841 0.99852 0.99829 0.99841'} points={chfPoints} spread={8} seed={5} gridTop={5} gridStep={33} prices={chfPrices} times={chfTimes} priceLine={288} priceTag="0.99841" />
      </ChildWindow>
    </div>
  );
}

const chartTabs = ['EURUSD,M1', 'USDJPY,M1', 'GBPUSD,M1', 'AUDUSD,M1'];

/* ---------- dialog ---------- */

function Check({ id, label, checked }) {
  return (
    <div className="flex h-4 items-center gap-[3px]">
      <span className="grid h-4 w-4 place-items-center">
        <input id={id} type="checkbox" defaultChecked={checked} className="peer col-start-1 row-start-1 h-4 w-4 appearance-none border border-[#8e8f8f] bg-linear-to-br from-[#d5d8dc] to-[#f6f6f6] shadow-[inset_0_0_0_2px_#f4f4f4]" />
        <svg width="12" height="12" viewBox="0 0 12 12" className="pointer-events-none col-start-1 row-start-1 hidden peer-checked:block" aria-hidden="true"><path d="M2 6l3 4 5-9" fill="none" stroke="#4a5f97" strokeWidth="2.200" /></svg>
      </span>
      <label htmlFor={id} className="whitespace-nowrap">{label}</label>
    </div>
  );
}

const Group = ({ title, className = '', children }) => (
  <fieldset className={`rounded border border-[#d5dfe5] px-[9px] ${className}`}>
    <legend className="-ml-1 px-1 leading-4">{title}</legend>
    {children}
  </fieldset>
);

const dlgBtn = 'h-[26px] w-[98px] rounded-[3px] border bg-linear-to-b from-[#f3f3f3] via-[#ebebeb] to-[#cfcfcf] text-[13px]';

function ScriptDialog() {
  const tab = 'border border-[#8c8e94] border-b-0 bg-linear-to-b from-[#f3f3f3] to-[#d4d4d4] whitespace-nowrap';
  return (
    <div role="dialog" aria-label="Script - LoadHistory-1 script" className="absolute top-[255px] left-[471px] w-[818px] rounded-lg border border-[#b9cfe0] bg-[#17365a]/75 px-1.5 pb-1.5 text-black shadow-[0_2px_12px_4px_rgba(0,0,0,0.6),0_0_0_1px_#0b1a2a] backdrop-blur-xs">
      <div className="flex h-[32px] items-start justify-between">
        <h2 className="mt-1 rounded-xl bg-white/45 pr-1 font-['Open_Sans',sans-serif] text-[14px] leading-6 shadow-[0_0_10px_5px_rgba(255,255,255,0.45)]">Script - LoadHistory-1 script</h2>
        <div className="flex h-6 rounded-b-md border border-t-0 border-[#cdd8e2]">
          <button type="button" aria-label="Справка" className="w-[35px] rounded-bl border-r border-[#cdd8e2] bg-linear-to-b from-[#9aa9b8] to-[#4a5f76] text-[18px] leading-5 font-bold text-white">?</button>
          <button type="button" aria-label="Закрыть" className="flex w-[58px] items-center justify-center rounded-br bg-linear-to-b from-[#dc9a8c] via-[#c2402a] to-[#b53218]">
            <Svg w={16} h={14} vb="0 0 16 14"><path d="M3 2l10 10M13 2L3 12" stroke="#5a2018" strokeWidth="5" /><path d="M3 2l10 10M13 2L3 12" stroke="#fff" strokeWidth="3" /></Svg>
          </button>
        </div>
      </div>
      <div className="border border-[#c5d6e4] bg-[#f0f0f0] px-2 pt-2 font-['Liberation_Sans',sans-serif] text-[14px] outline outline-[#10233a]">
        <div className="flex items-end pl-0.5">
          <button type="button" className={`${tab} h-[21px] w-[95px] leading-5`}>О программе</button>
          <button type="button" className="-mb-px h-[25px] w-[58px] border border-b-0 border-[#8c8e94] bg-white pb-1">Общие</button>
          <button type="button" className={`${tab} h-[21px] w-[96px] leading-5`}>Зависимости</button>
        </div>
        <div className="grid h-[256px] grid-cols-2 grid-rows-[129px_99px] gap-x-2 gap-y-[11px] border border-[#8c8e94] bg-white pt-3 pr-1 pl-[13px]">
          <Group title="Общие">
            <div className="mt-3.5 flex h-6 items-center gap-2.5">
              <div className="grid items-center">
                <select aria-label="позиции" className="col-start-1 row-start-1 h-6 w-[130px] appearance-none rounded-[3px] border border-[#707070] bg-linear-to-b from-[#f2f2f2] to-[#cfcfcf] pl-[3px] text-[13px]">
                  <option>Long &amp; Short</option>
                </select>
                <span className="pointer-events-none col-start-1 row-start-1 mr-1.5 justify-self-end"><Svg w={9} h={5} vb="0 0 9 5"><path d="M0 0h9L4.500 5z" fill="#000" /></Svg></span>
              </div>
              <span>позиции</span>
            </div>
            <div className="mt-[18px] flex flex-col gap-3.5">
              <Check id="alerts" label="Разрешить алерты" checked />
              <div className="pl-5"><Check id="repeat" label="Не повторять алерт" /></div>
            </div>
          </Group>
          <Group title="Безопасность" className="col-start-2 row-span-2 row-start-1">
            <div className="mt-4 flex flex-col gap-3.5 pl-0.5">
              <Check id="dll" label="Разрешить импорт функций из DLL" />
              <Check id="ext" label="Разрешить импорт из внешних экспертов" checked />
              <Check id="sig" label="Разрешить изменение настроек сигналов" />
            </div>
          </Group>
          <Group title="Автоматическая торговля">
            <div className="mt-[15px]"><Check id="trade" label="Разрешить советнику торговать" /></div>
          </Group>
        </div>
        <div className="mt-2.5 flex justify-end gap-2.5 pr-[3px]">
          <button type="button" className={`${dlgBtn} border-[#3c7fb1] shadow-[inset_0_0_0_1px_#7fd8f5]`}>OK</button>
          <button type="button" className={`${dlgBtn} border-[#707070]`}>Cancel</button>
          <button type="button" className={`${dlgBtn} border-[#707070]`}>Сброс</button>
        </div>
        <div className="-mr-1.5 flex h-3 items-end justify-end pb-0.5">
          <Svg w={8} h={8} vb="0 0 8 8"><path d="M0 0h3v3H0zM5 0h3v3H5zM0 5h3v3H0zM5 5h3v3H5z" fill="#bdbdbd" /></Svg>
        </div>
      </div>
    </div>
  );
}

/* ---------- terminal ---------- */

const log = [
  ['2015.12.07 14:20:23.684', "HistoryCenter: 2 bars imported in 'USDCHF60'", 'i'],
  ['2015.12.07 14:20:23.260', 'Script LoadHistory-1 script USDCHF,H1: removed', 'w'],
  ['2015.12.07 14:20:22.488', "HistoryCenter: synchronize 'USDCHF60'", 'i'],
  ['2015.12.07 14:20:21.988', "HistoryCenter: 2 bars imported in 'USDCHF60'", 'i'],
];
const termTabs = [['Торговля'], ['Активы'], ['История Счета'], ['Новости'], ['Алерты'], ['Почта', '6'], ['Маркет', '75'], ['Сигналы'], ['Библиотека'], ['Эксперты']];

function Terminal() {
  return (
    <section className="mt-[3px] flex border-b border-[#a0a0a0] pb-px">
      <div className="flex w-3 shrink-0 flex-col items-center">
        <button type="button" aria-label="Закрыть" className="py-[3px]"><Svg w={7} h={7} vb="0 0 8 8"><path d="M1 1l6 6M7 1L1 7" stroke="#000" strokeWidth="1.800" /></Svg></button>
        <span className="mt-2 flex w-[11px] flex-1 rotate-180 items-center bg-[#c9d8e7] text-[11px] leading-none text-[#4c5a68] [writing-mode:vertical-rl]">Терминал</span>
      </div>
      <div className="min-w-0 flex-1">
        <div className="flex h-[109px] overflow-hidden border-t border-l border-[#8c8c8c] bg-white">
          <table className="w-full table-fixed border-collapse self-start text-[11px] text-black">
            <colgroup><col className="w-[159px]" /><col /></colgroup>
            <thead>
              <tr className="h-6 border-b border-[#c4c4c4] bg-linear-to-b from-white to-[#f2f3f5]">
                <th className="border-r border-[#e0e0e0] pl-1.5 text-left font-normal">Время</th>
                <th className="pl-1.5 text-left font-normal">Сообщение</th>
              </tr>
            </thead>
            <tbody>
              {log.map(([t, m, k], i) => (
                <tr key={i} className={`h-5 border-b border-[#c4c4c4] ${i % 2 ? 'bg-white' : 'bg-[#eaeaea]'}`}>
                  <td className="border-r border-[#c4c4c4] p-0">
                    <span className="flex items-center whitespace-nowrap">
                      <span className="flex w-[21px] justify-center">
                        {k === 'w'
                          ? <Svg w={12} h={12} vb="0 0 12 12"><path d="M6 1l5 10H1z" fill="#f4e43a" stroke="#7a7410" /><path d="M6 4v4M6 9v1" stroke="#333" /></Svg>
                          : <Svg w={9} h={9} vb="0 0 9 9"><circle cx="4.500" cy="4.500" r="3.500" fill="#bbb" stroke="#888" /><path d="M3 5.500l3-2" stroke="#666" /></Svg>}
                      </span>
                      {t}
                    </span>
                  </td>
                  <td className="p-0 pl-[5px]">{m}</td>
                </tr>
              ))}
            </tbody>
          </table>
          <ScrollBar thumb="h-[19px]" />
        </div>
        <nav className="mr-1 flex h-[21px] items-start border-t border-black pl-3 text-[11px] text-[#808080]">
          {termTabs.map(([t, n]) => (
            <React.Fragment key={t}>
              <button type="button" className="h-[19px] pr-[9px] whitespace-nowrap">{t}{n && <b className="ml-0.5 text-[9px] text-[#dd1111]">{n}</b>}</button>
              {t !== 'Эксперты' && <span className="mt-1 mr-2 h-3 w-px bg-[#808080]" />}
            </React.Fragment>
          ))}
          <button type="button" className="-mt-px h-[19px] border-x border-b border-black bg-white px-2 text-black">Журнал</button>
        </nav>
      </div>
    </section>
  );
}

function StatusBar() {
  return (
    <footer className="flex h-[23px] items-center pt-0.5 text-[11px] text-black">
      <span>Для справки, нажмите F1</span>
      <div className="ml-auto flex h-[18px] items-center">
        <span className="flex h-full w-[149px] items-center border-l border-[#9a9a9a] pl-1.5">Default</span>
        <span className="h-full w-[131px] border-l border-[#9a9a9a]" />
        <span className="h-full w-[89px] border-l border-[#9a9a9a]" />
        <span className="h-full w-[89px] border-l border-[#9a9a9a]" />
        <span className="h-full w-[85px] border-l border-[#9a9a9a]" />
        <span className="h-full w-[87px] border-l border-[#9a9a9a]" />
        <span className="h-full w-[84px] border-l border-[#9a9a9a]" />
        <span className="flex h-full w-[162px] items-center border-l border-[#9a9a9a] pl-1">
          <Svg w={24} h={12} vb="0 0 24 12">
            <path d="M1.500 0v10M4.500 0v9M7.500 0v8M10.500 0v7M13.500 0v6M16.500 0v5M19.500 0v4M22.500 0v3" stroke="#5a7d14" strokeWidth="2" />
            <path d="M1.500 11v1M4.500 10v2M7.500 9v3M10.500 8v4M13.500 7v5M16.500 6v6M19.500 5v7M22.500 4v8" stroke="#a02010" strokeWidth="2" />
          </Svg>
          <span className="ml-[38px]">1980/14 kb</span>
        </span>
      </div>
    </footer>
  );
}

/* ---------- taskbar ---------- */

const taskIcons = {
  explorer: <Svg w={42} h={40} vb="0 0 42 40"><path d="M4 5h13l2 3h18v10H4z" fill="#e9c95a" stroke="#c7a23c" /><path d="M7 4h10v6H7zM20 3h10v6H20z" fill="#fff" stroke="#aaa" /><path d="M2 9h38v28H2z" fill="#f8e48f" stroke="#d6b44e" /><path d="M8 38V26c0-3 26-3 26 0v12h-7v-7H15v7z" fill="#7fc4ea" stroke="#3f8dc0" /></Svg>,
  player: <Svg w={34} h={36} vb="0 0 34 36"><path d="M6 2h26v30H6z" fill="#4d93c4" /><path d="M3 3h26v31H3z" fill="#7bb9e0" stroke="#3c7ba8" /><path d="M1 4h25v30H1z" fill="#8ec9ea" stroke="#4a8ab8" /><circle cx="13.500" cy="18" r="10" fill="#f07a1c" stroke="#fbc98e" /><path d="M10 11l10 7-10 7z" fill="#fff" /></Svg>,
  yandex: <Svg w={42} h={40} vb="0 0 42 40"><path d="M2 1h30l8 19-8 19H2z" fill="#f3f3f3" /><path d="M12 6l7 16L27 6M19.500 20v15" stroke="#dd1111" strokeWidth="4" /></Svg>,
  chrome: <Svg w={38} h={38} vb="0 0 38 38"><path d="M19 19L3.400 10A18 18 0 0 1 34.600 10z" fill="#dd4b3e" /><path d="M19 19L34.600 10A18 18 0 0 1 19 37z" fill="#fcd04b" /><path d="M19 19L19 37A18 18 0 0 1 3.400 10z" fill="#1ea362" /><path d="M19 10h15.600L27 24z" fill="#fcd04b" /><path d="M3.400 10L11 23l8-4V10z" fill="#dd4b3e" /><circle cx="19" cy="19" r="8.500" fill="#fff" /><circle cx="19" cy="19" r="6.500" fill="#4587f4" /></Svg>,
  skype: <Svg w={42} h={42} vb="0 0 42 42"><circle cx="14" cy="14" r="12" fill="#10a5e4" /><circle cx="25" cy="27" r="12" fill="#10a5e4" /><circle cx="20" cy="20" r="16" fill="#16ace9" /><path d="M27 14c-2-5-14-5-14 1s14 4 14 10-13 6-14 0" stroke="#fff" strokeWidth="4.500" /><circle cx="33" cy="34" r="7" fill="#fbc02d" stroke="#fff" /><path d="M31 32l2-2v8" stroke="#222" strokeWidth="1.800" /></Svg>,
  word: <Svg w={40} h={40} vb="0 0 40 40"><path d="M8 1h24v36H4V7z" fill="#2c5fae" /><path d="M8 1v6H2z" fill="#9fc0ea" /><path d="M13 7h25v31H13z" fill="#f6f9fd" stroke="#b8c8dc" /><path d="M14 11l3 10 4-9 2 9 4-10" stroke="#2a50a0" strokeWidth="2.500" /><path d="M28 12h8M28 16h8M28 20h8M18 25h18M18 29h18M18 33h18" stroke="#2a50a0" strokeWidth="2" /></Svg>,
  hex: <Svg w={40} h={40} vb="0 0 40 40"><rect width="40" height="40" rx="3" fill="#c8101e" /><path d="M11 23V15l9-5 6 3.500M29 17v8l-9 5-6-3.500" stroke="#fff" strokeWidth="4.500" /></Svg>,
  forex: <Svg w={40} h={40} vb="0 0 40 40"><rect width="40" height="40" fill="#33363c" stroke="#777" /><path d="M20 18L24 0M20 18L38 10M20 20L38 26M18 22L4 37M17 18L2 24M18 17L8 5M22 22l4 8" stroke="#4cd53c" strokeWidth="4" /><path d="M30 22l7 3c0 8-2 11-7 14-5-3-7-6-7-14z" fill="#f6cf3a" stroke="#ddd" /><path d="M30 22v8h-7c0-2 0-3 0-5zM30 30h6c-1 5-3 7-6 9z" fill="#2f6fd0" /></Svg>,
  doc: <Svg w={34} h={40} vb="0 0 34 40"><path d="M1 1h24l8 8v30H1z" fill="#fff" stroke="#888" /><path d="M25 1v8h8" fill="#ddd" stroke="#444" /><path d="M6 12h22v19H6z" fill="#fff" stroke="#223" /><path d="M6 14h22" stroke="#1a2a9a" strokeWidth="4" /><path d="M9 20h4M21 20h4" stroke="#a02020" strokeWidth="4" /><path d="M15 20h4M9 27h4" stroke="#20808a" strokeWidth="4" /><path d="M15 27h4" stroke="#b0a020" strokeWidth="4" /><path d="M21 27h4" stroke="#8030a0" strokeWidth="4" /></Svg>,
  g: <Svg w={38} h={40} vb="0 0 38 40"><circle cx="20" cy="21" r="15" stroke="#222" strokeWidth="2.500" /><path d="M3 20C3 8 12 2 20 2s14 5 16 12" stroke="#222" strokeWidth="3.500" /><path d="M27 16c-3-5-13-4-13 4s11 10 13 5v-3h-6" stroke="#111" strokeWidth="4.500" /></Svg>,
  scape: <Svg w={40} h={34} vb="0 0 40 34"><path d="M2 27c8-2 6-10 8-15 1-5 5-8 11-8" stroke="#6b727c" strokeWidth="6" /><path d="M23 4c7 0 12 4 13 11" stroke="#e0644a" strokeWidth="6" /></Svg>,
};

function TaskButton({ label, look, children }) {
  return (
    <button type="button" aria-label={label} className={`flex h-[46px] w-[66px] shrink-0 items-center justify-center rounded-[3px] border ${look}`}>{children}</button>
  );
}

const seg = { 0: 'abcdef', 1: 'bc', 2: 'abged', 4: 'fgbc' };
const segLine = { a: 'M3 1h9', b: 'M13 2l-1 9', c: 'M12 13l-1 9', d: 'M2 23h8', e: 'M2 13l-1 9', f: 'M3 2l-1 9', g: 'M3 12h8' };

function Clock() {
  const chars = '14:24:11'.split('');
  return (
    <div className="flex h-8 w-[142px] items-center justify-center gap-[3px] rounded border-2 border-[#332b36] bg-linear-to-b from-[#dfdfae] to-[#c5c789] shadow-[0_0_0_2px_rgba(180,170,185,0.4)]" role="img" aria-label="14:24:11">
      {chars.map((c, i) => c === ':' ? (
        <Svg key={i} w={4} h={22} vb="0 0 4 24"><path d="M0 7h4v3H0zM0 15h4v3H0z" fill="#1c1c14" /></Svg>
      ) : (
        <Svg key={i} w={14} h={22} vb="0 0 14 24">
          <path d={Object.values(segLine).join('')} stroke="#b9bb87" strokeWidth="2.500" />
          <path d={seg[c].split('').map((k) => segLine[k]).join('')} stroke="#1c1c14" strokeWidth="2.800" />
        </Svg>
      ))}
    </div>
  );
}

function Taskbar() {
  const glass = 'border-[#c9b6bd] bg-linear-to-br from-white/35 to-white/15';
  return (
    <div className="relative flex h-12 items-center overflow-hidden border-t border-[#2c2a38] bg-linear-to-r from-[#5d404c] from-0% via-[#7a4f5c] via-35% to-[#54405a] to-100% shadow-[inset_0_1px_0_rgba(255,255,255,0.35)]">
      <div className="absolute inset-y-0 right-[170px] left-[800px] bg-[linear-gradient(100deg,rgba(150,120,140,0)_0%,#8d8fa8_8%,#857a90_20%,#76586a_28%,#74525e_38%,#5c74b8_40%,#5f76bd_59%,#a99c90_61%,#b0938c_69%,#bb8c84_76%,#5c4a5c_80%,#6a6480_84%,#66607a_95%,#5e506a_100%)]" />
      <div className="absolute top-2.5 left-[905px] h-3.5 w-[145px] rounded-full bg-[#4a4c68]/50 blur-xs" />
      <div className="absolute right-[140px] bottom-0 left-[820px] h-3 bg-[#3b516b] opacity-90 blur-xs" />
      <div className="relative flex flex-1 items-center">
        <button type="button" aria-label="Пуск" className="flex w-[61px] shrink-0 items-center justify-center">
          <Svg w={44} h={44} vb="0 0 44 44">
            <circle cx="22" cy="22" r="20.500" fill="#1d5d93" stroke="#8fb4d0" strokeWidth="1.500" />
            <path d="M4 18C7 4 37 4 40 18c-8 6-28 6-36 0z" fill="#6ea6cc" />
            <ellipse cx="22" cy="34" rx="13" ry="7" fill="#2fa8d8" />
            <path d="M12 12c4-3 7-2 9 0l-2 9c-3-2-6-2-9 0z" fill="#e8622c" />
            <path d="M23 13c3 2 6 2 9 0l-2 9c-3 2-6 2-9 0z" fill="#86c440" />
            <path d="M9 23c4-3 7-2 9 0l-2 9c-3-2-6-2-9 0z" fill="#3f9be0" />
            <path d="M20 24c3 2 6 2 9 0l-2 9c-3 2-6 2-9 0z" fill="#fbc52c" />
          </Svg>
        </button>
        <div className="ml-2 flex gap-1">
          <TaskButton label="Internet Explorer" look="border-transparent">
            <Svg w={42} h={42} vb="0 0 42 42"><path d="M36 24H14c1 9 12 9 14 4h8c-5 14-29 12-29-5S34 2 36 24zM14 19h14c-1-7-13-7-14 0z" fill="#5cc3f0" stroke="#2a8cc4" /><path d="M6 40C-4 34 18 2 38 3c3 1 3 5 0 10M6 40c4 1 8-2 10-4" stroke="#f5c52c" strokeWidth="3" /></Svg>
          </TaskButton>
          <TaskButton label="Проводник" look={glass}>{taskIcons.explorer}</TaskButton>
          <TaskButton label="Media Player" look="border-transparent">{taskIcons.player}</TaskButton>
          <TaskButton label="Yandex" look="border-transparent">{taskIcons.yandex}</TaskButton>
          <TaskButton label="Chrome" look={glass}>{taskIcons.chrome}</TaskButton>
          <TaskButton label="Skype" look="border-[#fbe2b8] bg-linear-to-b from-[#f5b04a] to-[#e8821e]">{taskIcons.skype}</TaskButton>
          <TaskButton label="Word" look={glass}>{taskIcons.word}</TaskButton>
          <TaskButton label="Терминал" look={glass}>{taskIcons.hex}</TaskButton>
          <TaskButton label="Forex" look={glass}>{taskIcons.forex}</TaskButton>
          <TaskButton label="Программа" look="border-[#efe4e6] bg-linear-to-br from-white/75 to-white/45">{taskIcons.doc}</TaskButton>
          <TaskButton label="Gadwin" look="border-[#d9cbd0] bg-linear-to-br from-white/55 to-white/35">{taskIcons.g}</TaskButton>
          <TaskButton label="PhotoScape" look="border-[#8f9db0] bg-white/20">
            <span className="flex flex-col items-center">{taskIcons.scape}<span className="text-[7px] leading-none font-bold text-[#a8b4c2]">HOTO CAPE</span></span>
          </TaskButton>
        </div>
        <div className="ml-auto flex items-center text-white">
          <button type="button" className="mr-[25px] font-['Open_Sans',sans-serif] text-[14px]">EN</button>
          <button type="button" aria-label="Скрытые значки" className="mr-[18px]"><Svg w={10} h={6} vb="0 0 10 6"><path d="M0 6h10L5 0z" fill="#fff" /></Svg></button>
          <button type="button" aria-label="Сеть" className="mr-2.5"><Svg w={20} h={20} vb="0 0 20 20"><rect x="6" y="4" width="13" height="10" fill="#3d4457" stroke="#fff" strokeWidth="1.500" /><path d="M12 14v4M7 18.500h10" stroke="#fff" strokeWidth="1.800" /><path d="M1 1h5v7H1zM3.500 8v7h3" stroke="#fff" strokeWidth="1.400" /></Svg></button>
          <button type="button" aria-label="Громкость" className="mr-6"><Svg w={20} h={20} vb="0 0 20 20"><path d="M1 7h3l5-5v16l-5-5H1z" fill="#fff" /><path d="M12 7c1.500 2 1.500 4 0 6M15 5c2.500 3 2.500 7 0 10" stroke="#fff" strokeWidth="1.300" /></Svg></button>
          <div className="mr-[9px] text-center font-['Liberation_Sans',sans-serif] text-[12px] leading-[13px] text-[#d4d2e0] italic">MON, 7<br />DEC</div>
          <Clock />
          <button type="button" aria-label="Показать рабочий стол" className="ml-1 h-[46px] w-3.5 border border-[#8f8598] bg-white/15" />
        </div>
      </div>
    </div>
  );
}

/* ---------- hand drawn marks ---------- */

const Mark = ({ d, w, h, width = 7, className, extra }) => (
  <svg width={w} height={h} viewBox={`0 0 ${w} ${h}`} className={`pointer-events-none absolute ${className}`} fill="none" stroke="#ff0000" strokeLinecap="round" strokeLinejoin="round" aria-hidden="true">
    <path d={d} strokeWidth={width} />
    {extra && <path d={extra} strokeWidth="14" />}
  </svg>
);

/* ---------- page ---------- */

const menu = ['Файл', 'Вид', 'Вставка', 'Графики', 'Сервис', 'Окно', 'Справка'];

const glassSpots = [
  'left-[668px] w-3 bg-[#a8788a]/70',
  'left-[704px] w-[320px] bg-[#62788f]/50',
  'left-[1030px] w-[160px] bg-[#62788f]/40',
  'left-[1316px] w-4 bg-[#4aa0cc]',
  'left-[1336px] w-[66px] bg-[#5d7690]/60',
  'left-[1442px] w-4 bg-[#c05068]',
  'left-[1466px] w-[70px] bg-[#5d7690]/50',
  'left-[1572px] w-4 bg-[#c05068]',
  'left-[1596px] w-[80px] bg-[#5d7690]/40',
  'left-[1700px] w-6 bg-[#9db4cc]/70',
];

export default function App() {
  return (
    <div className="relative flex min-h-screen w-full flex-col overflow-hidden bg-[#f0f0f0] font-['Noto_Sans',sans-serif]">
      <header className="relative flex h-[26px] items-start justify-between overflow-hidden border-b border-[#3a4658] bg-[linear-gradient(90deg,#c5d4e6_0%,#b4c6da_18%,#8fa7c3_26%,#93abc8_45%,#8fa8c5_59%,#cfe2f6_61%,#d8e8f8_67%,#8ba6c4_69%,#93abc8_74%,#7f99b8_75%,#93abc8_80%,#7f99b8_82%,#93abc8_87%,#34526f_88%,#3b5878_91%,#7f93aa_93%,#8094ab_100%)]">
        {glassSpots.map((s) => <span key={s} className={`absolute top-1.5 h-3.5 rounded-full blur-xs ${s}`} />)}
        <h1 className="relative flex h-[26px] items-center gap-1.5 font-['Open_Sans',sans-serif] text-[14px] whitespace-nowrap text-black">
          <Svg w={16} h={20} vb="0 0 16 20"><path d="M0 1c6-2 10-1 15 1 1 8-1 13-8 17-3-1-5-3-7-5z" fill="#d81e28" /><path d="M5 15V5h4c4 0 4 5 0 5H6" stroke="#fff" strokeWidth="2" /></Svg>
          204116: Pepperstone-Demo02 - Демо Счет - USDCHF,H1
        </h1>
        <div className="relative mr-[3px] flex h-[23px] rounded-b border border-t-0 border-[#c2ccd8] bg-[#7f91a8]">
          <button type="button" aria-label="Свернуть" className="flex w-[35px] items-end justify-center border-r border-[#b4c0cd] pb-1"><Svg w={16} h={5} vb="0 0 16 5"><rect x=".5" y=".5" width="15" height="3.500" fill="#fff" stroke="#4a5568" /></Svg></button>
          <button type="button" aria-label="Развернуть" className="flex w-[33px] items-center justify-center border-r border-[#b4c0cd]"><Svg w={18} h={18} vb="0 0 18 18"><rect x="5" y="1" width="12" height="12" fill="#fff" stroke="#4a5568" /><rect x="1" y="4" width="12" height="12" fill="#fff" stroke="#4a5568" /><rect x="5" y="8" width="4" height="4" fill="#7f91a8" stroke="#4a5568" /></Svg></button>
          <button type="button" aria-label="Закрыть" className="flex w-[59px] items-center justify-center"><Svg w={16} h={14} vb="0 0 16 14"><path d="M3 2l10 10M13 2L3 12" stroke="#4a5568" strokeWidth="4.500" /><path d="M3 2l10 10M13 2L3 12" stroke="#fff" strokeWidth="2.800" /></Svg></button>
        </div>
      </header>
      <nav className="flex h-[26px] items-center gap-5 border-b border-[#a5a5a5] pl-[5px] font-['Open_Sans',sans-serif] text-[14px] text-[#9b9b9b]">
        {menu.map((m) => <button key={m} type="button">{m}</button>)}
      </nav>
      <MainToolbar />
      <DrawToolbar />
      <main className="flex flex-1">
        <aside className="flex w-[186px] shrink-0 flex-col border-r-2 border-[#6a6a6a]">
          <MarketWatch />
          <Navigator />
        </aside>
        <div className="flex min-w-0 flex-1 flex-col">
          <Workspace />
          <nav className="flex h-[21px] items-start border-t border-[#6a6a6a] pl-3 text-[11px] text-[#808080]">
            {chartTabs.map((t, i) => (
              <React.Fragment key={t}>
                <button type="button" className="h-[19px] pr-2">{t}</button>
                {i < 3 && <span className="mt-1 mr-[9px] h-3 w-px bg-[#808080]" />}
              </React.Fragment>
            ))}
            <button type="button" className="-mt-px h-5 border border-t-0 border-black bg-white px-2 text-black">USDCHF,H1</button>
            <span className="mt-1.5 mr-1.5 ml-auto flex gap-3">
              <Svg w={4} h={8} vb="0 0 4 8"><path d="M4 0v8L0 4z" fill="#888" /></Svg>
              <Svg w={4} h={8} vb="0 0 4 8"><path d="M0 0v8l4-4z" fill="#888" /></Svg>
            </span>
          </nav>
        </div>
      </main>
      <Terminal />
      <StatusBar />
      <Taskbar />

      <ScriptDialog />
      <Mark w={90} h={80} className="top-[296px] left-[810px]" width={8} d="M8 10h9l14 16 2 6 18 12 18 14 13 10M66 36l6 14 10 18M49 58l12 2 8 5 13 4M60 52l20 16" />
      <Mark w={90} h={36} className="top-[894px] left-[448px]" d="M75 18H9M26 6l-7 6-12 6 14 10" />
      <Mark w={70} h={30} className="top-[920px] left-[440px]" d="M54 14H9M22 6L8 14l13 6" />
      <Mark w={70} h={36} className="top-[936px] left-[405px]" d="M53 15H10M24 6L9 14l14 11" />
      <Mark w={96} h={46} className="top-[948px] left-[439px]" d="M33 10L10 24l22 13" extra="M24 23l50-1 3 2" />
    </div>
  );
}
